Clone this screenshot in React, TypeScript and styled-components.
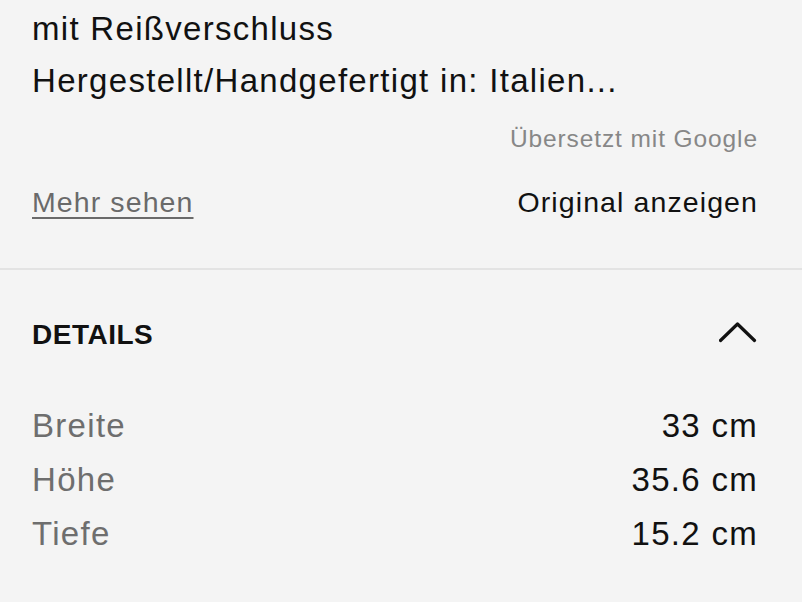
import React from "react";
import styled, { createGlobalStyle } from "styled-components";

const Global = createGlobalStyle`
  html, body {
    margin: 0;
    padding: 0;
    background: #f4f4f4;
  }
  body {
    font-family: "Liberation Sans", Arial, sans-serif;
    -webkit-font-smoothing: antialiased;
  }
`;

const Page = styled.div`
  width: 802px;
  height: 602px;
  overflow: hidden;
  background: #f4f4f4;
  color: #111;
`;

const Description = styled.section`
  padding: 3px 44px 0 32px;
  display: flex;
  flex-direction: column;
`;

const BodyLine = styled.p`
  margin: 0;
  font-size: 33px;
  line-height: 52px;
  letter-spacing: 1.3px;
  color: #111;
  white-space: nowrap;
`;

const TranslatedNote = styled.div`
  margin-top: 17px;
  align-self: flex-end;
  font-size: 24.5px;
  line-height: 30px;
  letter-spacing: 0.9px;
  color: #878787;
`;

const ActionRow = styled.div`
  margin-top: 28px;
  display: flex;
  justify-content: space-between;
  align-items: baseline;
  font-size: 28.5px;
  line-height: 40px;
  letter-spacing: 1.1px;
`;

const MoreLink = styled.a`
  color: #6a6a6a;
  text-decoration: underline;
  text-decoration-thickness: 2px;
  text-underline-offset: 5px;
  cursor: pointer;
`;

const OriginalLink = styled.a`
  color: #111;
  cursor: pointer;
`;

const Divider = styled.hr`
  margin: 46px 0 0;
  border: 0;
  height: 2px;
  background: #e3e3e3;
`;

const Details = styled.section`
  padding: 0 44px 0 32px;
`;

const DetailsHeader = styled.div`
  display: flex;
  justify-content: space-between;
  align-items: center;
  height: 129px;
`;

const DetailsTitle = styled.h2`
  margin: 0;
  font-size: 28px;
  line-height: normal;
  font-weight: 700;
  letter-spacing: 0.5px;
  color: #111;
`;

const Chevron = styled.svg`
  width: 38px;
  height: 22px;
  margin-right: 1px;
  margin-bottom: 6px;
`;

const SpecList = styled.dl`
  margin: 0;
  display: flex;
  flex-direction: column;
`;

const SpecRow = styled.div`
  display: flex;
  justify-content: space-between;
  font-size: 33px;
  line-height: 54px;
  letter-spacing: 1.3px;
`;

const SpecLabel = styled.dt`
  color: #6e6e6e;
`;

const SpecValue = styled.dd`
  margin: 0;
  color: #111;
`;

const specs = [
  { label: "Breite", value: "33 cm" },
  { label: "Höhe", value: "35.6 cm" },
  { label: "Tiefe", value: "15.2 cm" },
];

export default function App() {
  return (
    <Page>
      <Global />
      <Description>
        <BodyLine>mit Reißverschluss</BodyLine>
        <BodyLine>Hergestellt/Handgefertigt in: Italien...</BodyLine>
        <TranslatedNote>Übersetzt mit Google</TranslatedNote>
        <ActionRow>
          <MoreLink>Mehr sehen</MoreLink>
          <OriginalLink>Original anzeigen</OriginalLink>
        </ActionRow>
      </Description>
      <Divider />
      <Details>
        <DetailsHeader>
          <DetailsTitle>DETAILS</DetailsTitle>
          <Chevron viewBox="0 0 38 22" fill="none">
            <path
              d="M1.5 19.5 L18.5 3 L35.5 19.5"
              stroke="#111"
              strokeWidth="3.2"
              strokeLinecap="round"
              strokeLinejoin="round"
            />
          </Chevron>
        </DetailsHeader>
        <SpecList>
          {specs.map((s) => (
            <SpecRow key={s.label}>
              <SpecLabel>{s.label}</SpecLabel>
              <SpecValue>{s.value}</SpecValue>
            </SpecRow>
          ))}
        </SpecList>
      </Details>
    </Page>
  );
}
